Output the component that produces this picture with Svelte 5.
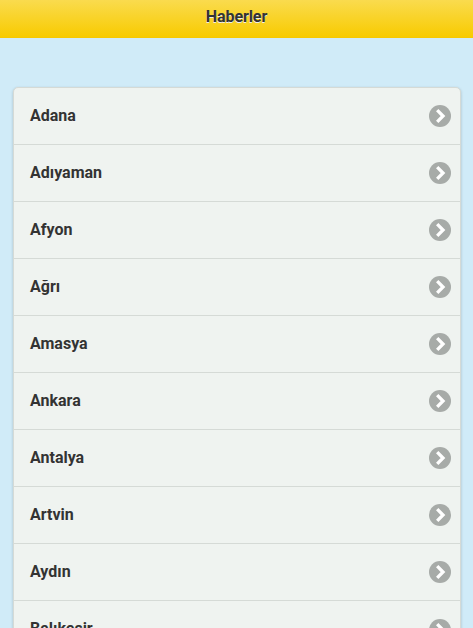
<script>
  const title = 'Haberler'

  const cities = [
    'Adana',
    'Adıyaman',
    'Afyon',
    'Ağrı',
    'Amasya',
    'Ankara',
    'Antalya',
    'Artvin',
    'Aydın',
    'Balıkesir',
  ]
</script>

<div class="page">
  <header>
    <h1>{title}</h1>
  </header>

  <main>
    <ul>
      {#each cities as city}
        <li>
          <span class="name">{city}</span>
          <svg class="icon" viewBox="0 0 22 22" aria-hidden="true">
            <circle cx="11" cy="11" r="11" />
            <path d="M8.2 5.2 L14 11 L8.2 16.8" />
          </svg>
        </li>
      {/each}
    </ul>
  </main>
</div>

<style>
  :global(body) {
    margin: 0;
    overflow: hidden;
  }
  .page {
    height: 100vh;
    overflow: hidden;
    background: #d0ebf8;
    color: #333;
    font-family: Roboto, 'Liberation Sans', sans-serif;
    font-size: 16px;
    font-weight: 700;
  }
  header {
    box-sizing: border-box;
    height: 38px;
    border-bottom: 1px solid #f7c800;
    background: linear-gradient(#fadb4e, #f8cb00);
  }
  h1 {
    margin: 0;
    padding-top: 6px;
    font-size: 16px;
    font-weight: 700;
    line-height: 21px;
    letter-spacing: -0.1px;
    text-align: center;
    text-shadow: 0 1px 0 #eee;
  }
  main {
    padding: 49px 12px 0 13px;
  }
  ul {
    margin: 0;
    padding: 0;
    border: 1px solid #d5dad6;
    border-radius: 5px;
    background: #eff3f0;
    box-shadow: 0 1px 3px rgba(0, 0, 0, 0.2);
    list-style: none;
  }
  li {
    display: flex;
    justify-content: space-between;
    align-items: center;
    box-sizing: border-box;
    height: 57px;
    padding: 0 9px 0 16px;
    border-bottom: 1px solid #d5dad6;
    cursor: pointer;
  }
  li:last-child {
    border-bottom: 0;
  }
  .name {
    padding-bottom: 2px;
    line-height: 21px;
    text-shadow: 0 1px 0 #f3f3f3;
  }
  .icon {
    flex: none;
    width: 22px;
    height: 22px;
  }
  .icon circle {
    fill: #a7aba8;
  }
  .icon path {
    fill: none;
    stroke: #fff;
    stroke-width: 3.3;
  }
</style>
